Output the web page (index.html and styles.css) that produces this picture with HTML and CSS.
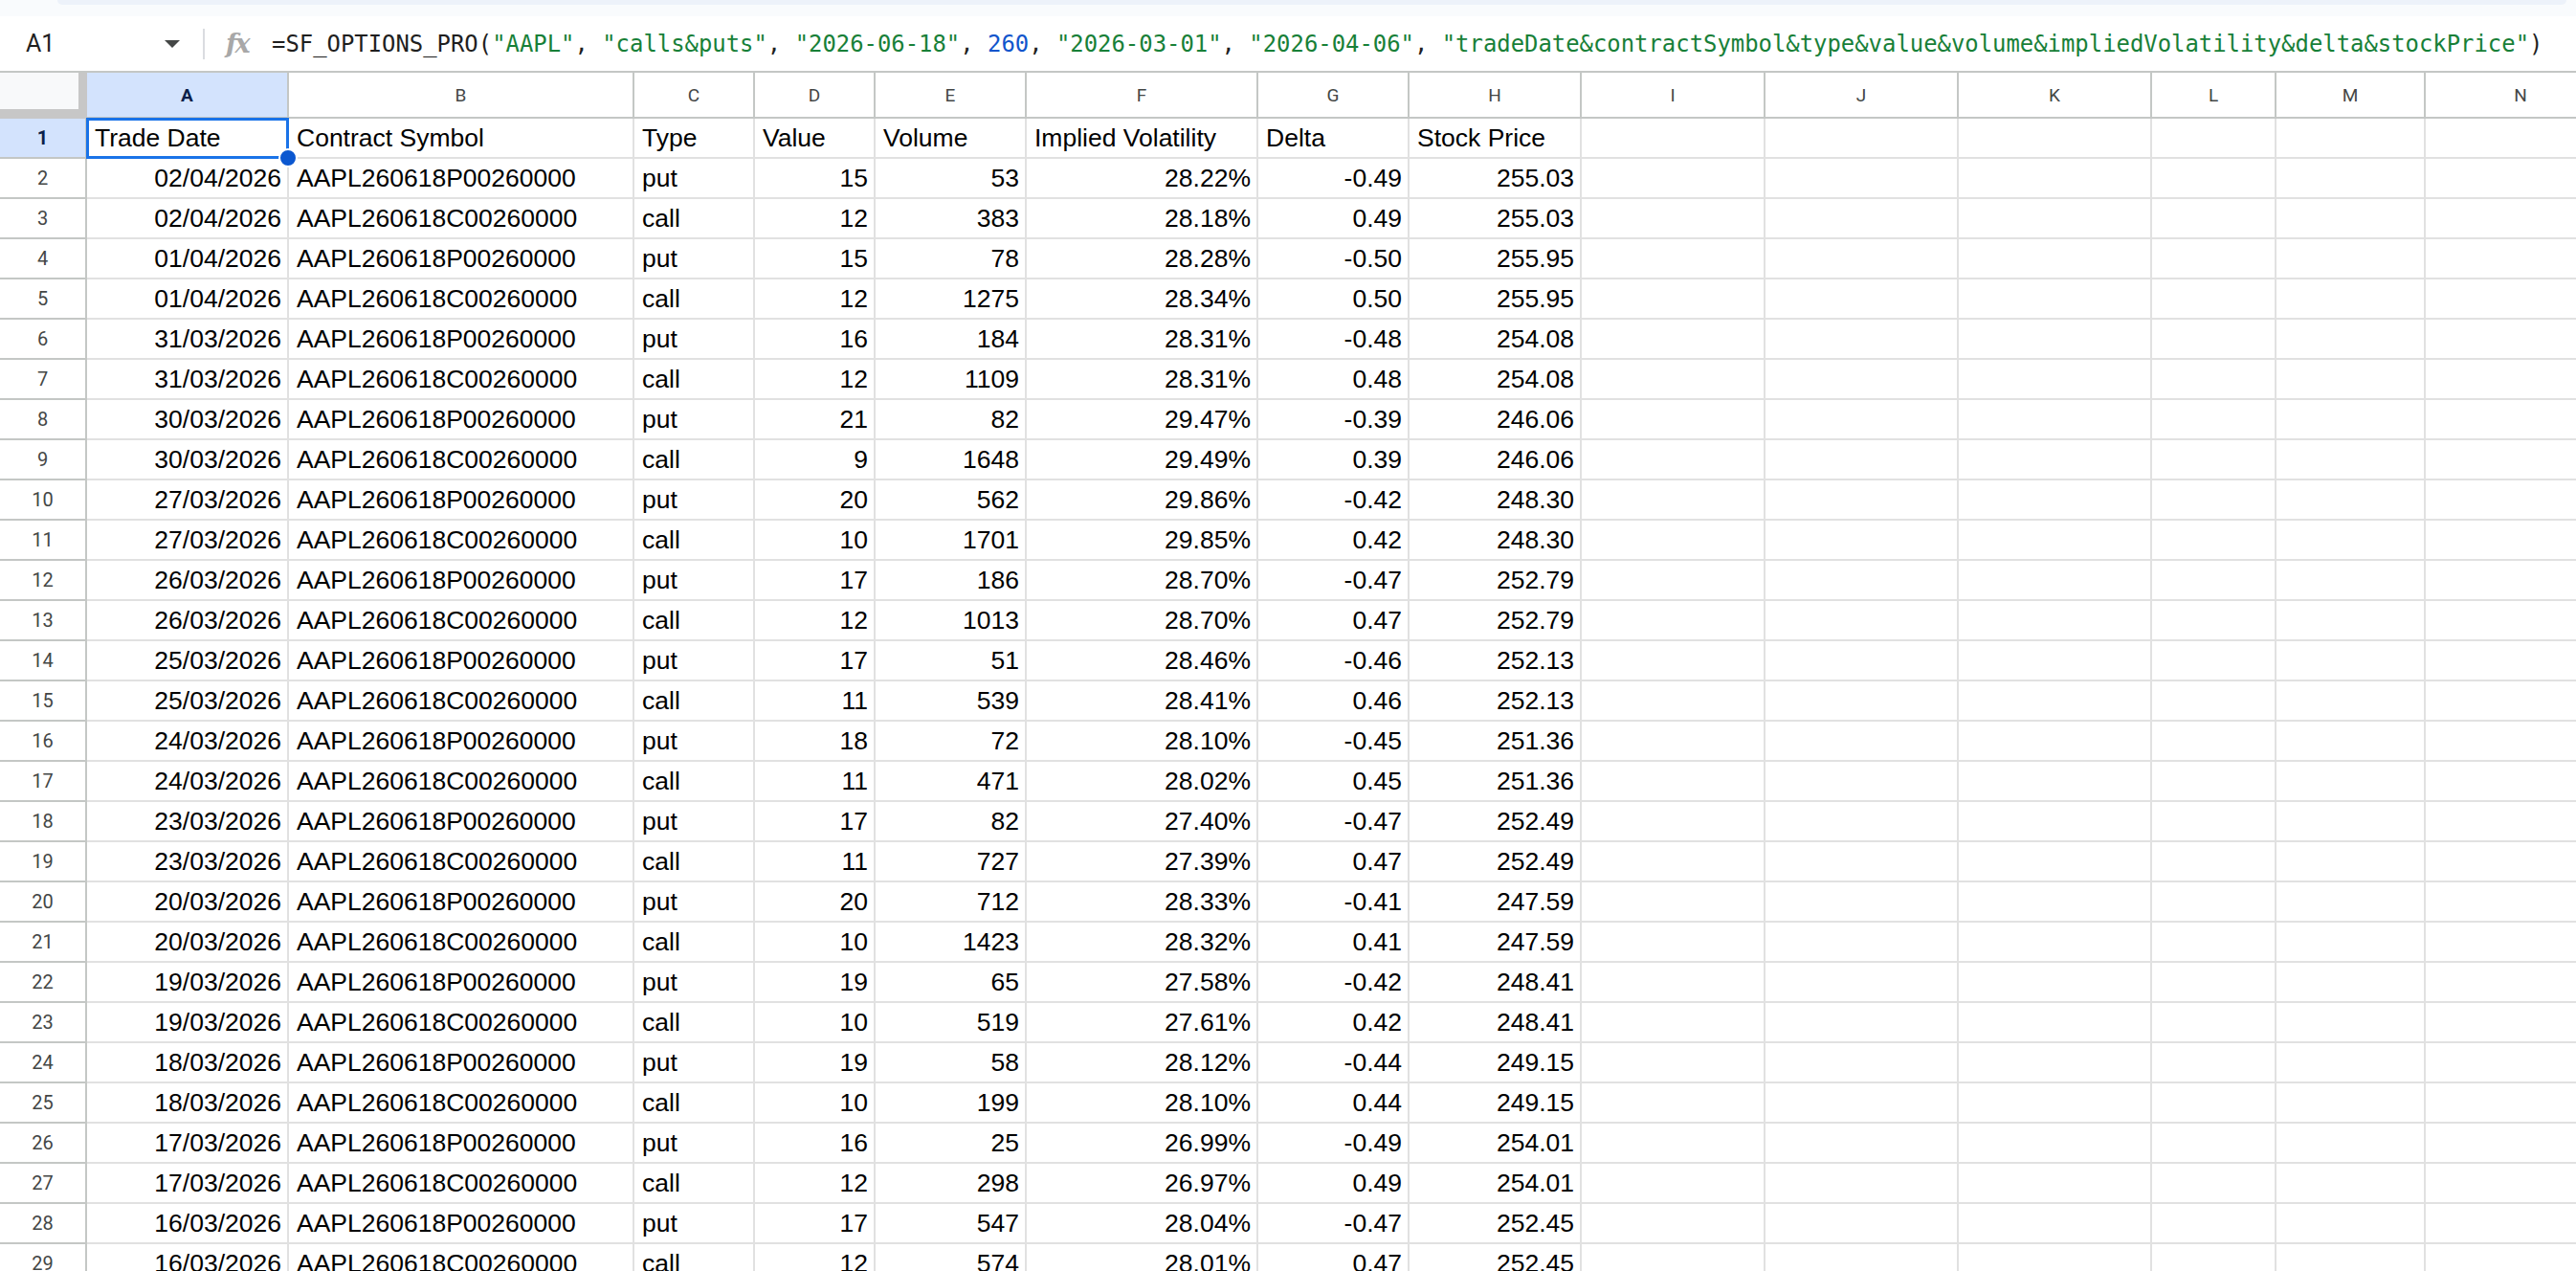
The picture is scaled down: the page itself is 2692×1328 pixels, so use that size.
FILE: index.html
```html
<!DOCTYPE html>
<html>
<head>
<meta charset="utf-8">
<link rel="stylesheet" href="styles.css">
</head>
<body>
<div class="app">
  <div class="topbar"><div class="toolbar-edge"></div></div>
  <div class="fbar">
    <div class="namebox"><span class="nb-text">A1</span><span class="nb-caret"></span></div>
    <div class="fsep"></div>
    <span class="fx">fx</span>
    <div class="formula"><span>=SF_OPTIONS_PRO(</span><span class="fs">"AAPL"</span>, <span class="fs">"calls&amp;puts"</span>, <span class="fs">"2026-06-18"</span>, <span class="fn">260</span>, <span class="fs">"2026-03-01"</span>, <span class="fs">"2026-04-06"</span>, <span class="fs">"tradeDate&amp;contractSymbol&amp;type&amp;value&amp;volume&amp;impliedVolatility&amp;delta&amp;stockPrice"</span>)</div>
  </div>
  <div class="sheet">
    <div class="row hdr"><div class="corner"></div><div class="ch sel">A</div><div class="ch">B</div><div class="ch">C</div><div class="ch">D</div><div class="ch">E</div><div class="ch">F</div><div class="ch">G</div><div class="ch">H</div><div class="ch">I</div><div class="ch">J</div><div class="ch">K</div><div class="ch">L</div><div class="ch">M</div><div class="ch">N</div></div>
    <div class="row"><div class="rh sel">1</div><div class="c a1">Trade Date<span class="handle"></span></div><div class="c">Contract Symbol</div><div class="c">Type</div><div class="c">Value</div><div class="c">Volume</div><div class="c">Implied Volatility</div><div class="c">Delta</div><div class="c">Stock Price</div><div class="c"></div><div class="c"></div><div class="c"></div><div class="c"></div><div class="c"></div><div class="c"></div></div>
    <div class="row"><div class="rh">2</div><div class="c n">02/04/2026</div><div class="c">AAPL260618P00260000</div><div class="c">put</div><div class="c n">15</div><div class="c n">53</div><div class="c n">28.22%</div><div class="c n">-0.49</div><div class="c n">255.03</div><div class="c"></div><div class="c"></div><div class="c"></div><div class="c"></div><div class="c"></div><div class="c"></div></div>
    <div class="row"><div class="rh">3</div><div class="c n">02/04/2026</div><div class="c">AAPL260618C00260000</div><div class="c">call</div><div class="c n">12</div><div class="c n">383</div><div class="c n">28.18%</div><div class="c n">0.49</div><div class="c n">255.03</div><div class="c"></div><div class="c"></div><div class="c"></div><div class="c"></div><div class="c"></div><div class="c"></div></div>
    <div class="row"><div class="rh">4</div><div class="c n">01/04/2026</div><div class="c">AAPL260618P00260000</div><div class="c">put</div><div class="c n">15</div><div class="c n">78</div><div class="c n">28.28%</div><div class="c n">-0.50</div><div class="c n">255.95</div><div class="c"></div><div class="c"></div><div class="c"></div><div class="c"></div><div class="c"></div><div class="c"></div></div>
    <div class="row"><div class="rh">5</div><div class="c n">01/04/2026</div><div class="c">AAPL260618C00260000</div><div class="c">call</div><div class="c n">12</div><div class="c n">1275</div><div class="c n">28.34%</div><div class="c n">0.50</div><div class="c n">255.95</div><div class="c"></div><div class="c"></div><div class="c"></div><div class="c"></div><div class="c"></div><div class="c"></div></div>
    <div class="row"><div class="rh">6</div><div class="c n">31/03/2026</div><div class="c">AAPL260618P00260000</div><div class="c">put</div><div class="c n">16</div><div class="c n">184</div><div class="c n">28.31%</div><div class="c n">-0.48</div><div class="c n">254.08</div><div class="c"></div><div class="c"></div><div class="c"></div><div class="c"></div><div class="c"></div><div class="c"></div></div>
    <div class="row"><div class="rh">7</div><div class="c n">31/03/2026</div><div class="c">AAPL260618C00260000</div><div class="c">call</div><div class="c n">12</div><div class="c n">1109</div><div class="c n">28.31%</div><div class="c n">0.48</div><div class="c n">254.08</div><div class="c"></div><div class="c"></div><div class="c"></div><div class="c"></div><div class="c"></div><div class="c"></div></div>
    <div class="row"><div class="rh">8</div><div class="c n">30/03/2026</div><div class="c">AAPL260618P00260000</div><div class="c">put</div><div class="c n">21</div><div class="c n">82</div><div class="c n">29.47%</div><div class="c n">-0.39</div><div class="c n">246.06</div><div class="c"></div><div class="c"></div><div class="c"></div><div class="c"></div><div class="c"></div><div class="c"></div></div>
    <div class="row"><div class="rh">9</div><div class="c n">30/03/2026</div><div class="c">AAPL260618C00260000</div><div class="c">call</div><div class="c n">9</div><div class="c n">1648</div><div class="c n">29.49%</div><div class="c n">0.39</div><div class="c n">246.06</div><div class="c"></div><div class="c"></div><div class="c"></div><div class="c"></div><div class="c"></div><div class="c"></div></div>
    <div class="row"><div class="rh">10</div><div class="c n">27/03/2026</div><div class="c">AAPL260618P00260000</div><div class="c">put</div><div class="c n">20</div><div class="c n">562</div><div class="c n">29.86%</div><div class="c n">-0.42</div><div class="c n">248.30</div><div class="c"></div><div class="c"></div><div class="c"></div><div class="c"></div><div class="c"></div><div class="c"></div></div>
    <div class="row"><div class="rh">11</div><div class="c n">27/03/2026</div><div class="c">AAPL260618C00260000</div><div class="c">call</div><div class="c n">10</div><div class="c n">1701</div><div class="c n">29.85%</div><div class="c n">0.42</div><div class="c n">248.30</div><div class="c"></div><div class="c"></div><div class="c"></div><div class="c"></div><div class="c"></div><div class="c"></div></div>
    <div class="row"><div class="rh">12</div><div class="c n">26/03/2026</div><div class="c">AAPL260618P00260000</div><div class="c">put</div><div class="c n">17</div><div class="c n">186</div><div class="c n">28.70%</div><div class="c n">-0.47</div><div class="c n">252.79</div><div class="c"></div><div class="c"></div><div class="c"></div><div class="c"></div><div class="c"></div><div class="c"></div></div>
    <div class="row"><div class="rh">13</div><div class="c n">26/03/2026</div><div class="c">AAPL260618C00260000</div><div class="c">call</div><div class="c n">12</div><div class="c n">1013</div><div class="c n">28.70%</div><div class="c n">0.47</div><div class="c n">252.79</div><div class="c"></div><div class="c"></div><div class="c"></div><div class="c"></div><div class="c"></div><div class="c"></div></div>
    <div class="row"><div class="rh">14</div><div class="c n">25/03/2026</div><div class="c">AAPL260618P00260000</div><div class="c">put</div><div class="c n">17</div><div class="c n">51</div><div class="c n">28.46%</div><div class="c n">-0.46</div><div class="c n">252.13</div><div class="c"></div><div class="c"></div><div class="c"></div><div class="c"></div><div class="c"></div><div class="c"></div></div>
    <div class="row"><div class="rh">15</div><div class="c n">25/03/2026</div><div class="c">AAPL260618C00260000</div><div class="c">call</div><div class="c n">11</div><div class="c n">539</div><div class="c n">28.41%</div><div class="c n">0.46</div><div class="c n">252.13</div><div class="c"></div><div class="c"></div><div class="c"></div><div class="c"></div><div class="c"></div><div class="c"></div></div>
    <div class="row"><div class="rh">16</div><div class="c n">24/03/2026</div><div class="c">AAPL260618P00260000</div><div class="c">put</div><div class="c n">18</div><div class="c n">72</div><div class="c n">28.10%</div><div class="c n">-0.45</div><div class="c n">251.36</div><div class="c"></div><div class="c"></div><div class="c"></div><div class="c"></div><div class="c"></div><div class="c"></div></div>
    <div class="row"><div class="rh">17</div><div class="c n">24/03/2026</div><div class="c">AAPL260618C00260000</div><div class="c">call</div><div class="c n">11</div><div class="c n">471</div><div class="c n">28.02%</div><div class="c n">0.45</div><div class="c n">251.36</div><div class="c"></div><div class="c"></div><div class="c"></div><div class="c"></div><div class="c"></div><div class="c"></div></div>
    <div class="row"><div class="rh">18</div><div class="c n">23/03/2026</div><div class="c">AAPL260618P00260000</div><div class="c">put</div><div class="c n">17</div><div class="c n">82</div><div class="c n">27.40%</div><div class="c n">-0.47</div><div class="c n">252.49</div><div class="c"></div><div class="c"></div><div class="c"></div><div class="c"></div><div class="c"></div><div class="c"></div></div>
    <div class="row"><div class="rh">19</div><div class="c n">23/03/2026</div><div class="c">AAPL260618C00260000</div><div class="c">call</div><div class="c n">11</div><div class="c n">727</div><div class="c n">27.39%</div><div class="c n">0.47</div><div class="c n">252.49</div><div class="c"></div><div class="c"></div><div class="c"></div><div class="c"></div><div class="c"></div><div class="c"></div></div>
    <div class="row"><div class="rh">20</div><div class="c n">20/03/2026</div><div class="c">AAPL260618P00260000</div><div class="c">put</div><div class="c n">20</div><div class="c n">712</div><div class="c n">28.33%</div><div class="c n">-0.41</div><div class="c n">247.59</div><div class="c"></div><div class="c"></div><div class="c"></div><div class="c"></div><div class="c"></div><div class="c"></div></div>
    <div class="row"><div class="rh">21</div><div class="c n">20/03/2026</div><div class="c">AAPL260618C00260000</div><div class="c">call</div><div class="c n">10</div><div class="c n">1423</div><div class="c n">28.32%</div><div class="c n">0.41</div><div class="c n">247.59</div><div class="c"></div><div class="c"></div><div class="c"></div><div class="c"></div><div class="c"></div><div class="c"></div></div>
    <div class="row"><div class="rh">22</div><div class="c n">19/03/2026</div><div class="c">AAPL260618P00260000</div><div class="c">put</div><div class="c n">19</div><div class="c n">65</div><div class="c n">27.58%</div><div class="c n">-0.42</div><div class="c n">248.41</div><div class="c"></div><div class="c"></div><div class="c"></div><div class="c"></div><div class="c"></div><div class="c"></div></div>
    <div class="row"><div class="rh">23</div><div class="c n">19/03/2026</div><div class="c">AAPL260618C00260000</div><div class="c">call</div><div class="c n">10</div><div class="c n">519</div><div class="c n">27.61%</div><div class="c n">0.42</div><div class="c n">248.41</div><div class="c"></div><div class="c"></div><div class="c"></div><div class="c"></div><div class="c"></div><div class="c"></div></div>
    <div class="row"><div class="rh">24</div><div class="c n">18/03/2026</div><div class="c">AAPL260618P00260000</div><div class="c">put</div><div class="c n">19</div><div class="c n">58</div><div class="c n">28.12%</div><div class="c n">-0.44</div><div class="c n">249.15</div><div class="c"></div><div class="c"></div><div class="c"></div><div class="c"></div><div class="c"></div><div class="c"></div></div>
    <div class="row"><div class="rh">25</div><div class="c n">18/03/2026</div><div class="c">AAPL260618C00260000</div><div class="c">call</div><div class="c n">10</div><div class="c n">199</div><div class="c n">28.10%</div><div class="c n">0.44</div><div class="c n">249.15</div><div class="c"></div><div class="c"></div><div class="c"></div><div class="c"></div><div class="c"></div><div class="c"></div></div>
    <div class="row"><div class="rh">26</div><div class="c n">17/03/2026</div><div class="c">AAPL260618P00260000</div><div class="c">put</div><div class="c n">16</div><div class="c n">25</div><div class="c n">26.99%</div><div class="c n">-0.49</div><div class="c n">254.01</div><div class="c"></div><div class="c"></div><div class="c"></div><div class="c"></div><div class="c"></div><div class="c"></div></div>
    <div class="row"><div class="rh">27</div><div class="c n">17/03/2026</div><div class="c">AAPL260618C00260000</div><div class="c">call</div><div class="c n">12</div><div class="c n">298</div><div class="c n">26.97%</div><div class="c n">0.49</div><div class="c n">254.01</div><div class="c"></div><div class="c"></div><div class="c"></div><div class="c"></div><div class="c"></div><div class="c"></div></div>
    <div class="row"><div class="rh">28</div><div class="c n">16/03/2026</div><div class="c">AAPL260618P00260000</div><div class="c">put</div><div class="c n">17</div><div class="c n">547</div><div class="c n">28.04%</div><div class="c n">-0.47</div><div class="c n">252.45</div><div class="c"></div><div class="c"></div><div class="c"></div><div class="c"></div><div class="c"></div><div class="c"></div></div>
    <div class="row"><div class="rh">29</div><div class="c n">16/03/2026</div><div class="c">AAPL260618C00260000</div><div class="c">call</div><div class="c n">12</div><div class="c n">574</div><div class="c n">28.01%</div><div class="c n">0.47</div><div class="c n">252.45</div><div class="c"></div><div class="c"></div><div class="c"></div><div class="c"></div><div class="c"></div><div class="c"></div></div>
  </div>
</div>
</body>
</html>
```
FILE: styles.css
```css
html, body {
  margin: 0;
  padding: 0;
  background: #ffffff;
  overflow: hidden;
}
.app {
  width: 2692px;
  height: 1328px;
  overflow: hidden;
  font-family: "Liberation Sans", Arial, sans-serif;
  color: #000;
}
.topbar {
  height: 17px;
  background: #f9fbfd;
  display: flex;
}
.toolbar-edge {
  flex: 1;
  margin-left: 60px;
  margin-right: 10px;
  height: 5px;
  background: #edf2fa;
  border-radius: 0 0 14px 14px;
}
.fbar {
  box-sizing: border-box;
  height: 59px;
  border-bottom: 2px solid #c4c7c5;
  background: #ffffff;
  display: flex;
  align-items: center;
}
.namebox {
  box-sizing: border-box;
  width: 212px;
  padding: 0 24px 0 27px;
  display: flex;
  align-items: center;
  justify-content: space-between;
}
.nb-text {
  font-family: Roboto, "Liberation Sans", sans-serif;
  font-size: 25px;
  color: #1f1f1f;
}
.nb-caret {
  width: 0;
  height: 0;
  border-left: 8px solid transparent;
  border-right: 8px solid transparent;
  border-top: 8px solid #444746;
}
.fsep {
  width: 2px;
  height: 32px;
  background: #dadce0;
}
.fx {
  margin-left: 22px;
  width: 30px;
  font-family: "DejaVu Serif", "Liberation Serif", serif;
  font-style: italic;
  font-weight: bold;
  font-size: 27px;
  color: #a8a8a8;
  letter-spacing: -2px;
  line-height: 1;
}
.formula {
  margin-left: 18px;
  font-family: "DejaVu Sans Mono", "Liberation Mono", monospace;
  font-size: 23.9px;
  color: #1f1f1f;
  white-space: pre;
}
.fs { color: #188038; }
.fn { color: #1155cc; }

.sheet {
  display: flex;
  flex-direction: column;
}
.row {
  display: grid;
  grid-template-columns: 91px 211px 361px 126px 126px 158px 242px 158px 180px 192px 202px 202px 130px 156px 200px;
  height: 42px;
}
.row.hdr {
  height: 48px;
}
.corner {
  box-sizing: border-box;
  background: #f8f9fa;
  border-right: 9px solid #c7c7c7;
  border-bottom: 10px solid #c7c7c7;
}
.ch {
  box-sizing: border-box;
  border-right: 2px solid #c4c7c5;
  border-bottom: 2px solid #c4c7c5;
  display: flex;
  align-items: center;
  justify-content: center;
  font-family: Roboto, "Liberation Sans", sans-serif;
  font-size: 19px;
  color: #444746;
}
.ch.sel, .rh.sel {
  background: #d3e3fd;
  color: #0b1f4a;
  font-weight: bold;
}
.rh {
  box-sizing: border-box;
  border-right: 2px solid #c4c7c5;
  border-bottom: 2px solid #c4c7c5;
  display: flex;
  align-items: center;
  justify-content: center;
  font-family: Roboto, "Liberation Sans", sans-serif;
  font-size: 20px;
  color: #444746;
}
.c {
  box-sizing: border-box;
  border-right: 2px solid #e1e1e1;
  border-bottom: 2px solid #e1e1e1;
  padding: 0 6px 0 8px;
  font-size: 26.5px;
  line-height: 40px;
  white-space: nowrap;
  overflow: hidden;
}
.c.n {
  text-align: right;
}
.a1 {
  position: relative;
  overflow: visible;
}
.a1::after {
  content: "";
  position: absolute;
  left: -1px;
  top: -1px;
  right: -2px;
  bottom: -2px;
  border: 3px solid #1a73e8;
  pointer-events: none;
}
.handle {
  position: absolute;
  right: -11px;
  bottom: -11px;
  width: 16px;
  height: 16px;
  border-radius: 50%;
  background: #0b57d0;
  border: 2px solid #ffffff;
  z-index: 2;
}
```
